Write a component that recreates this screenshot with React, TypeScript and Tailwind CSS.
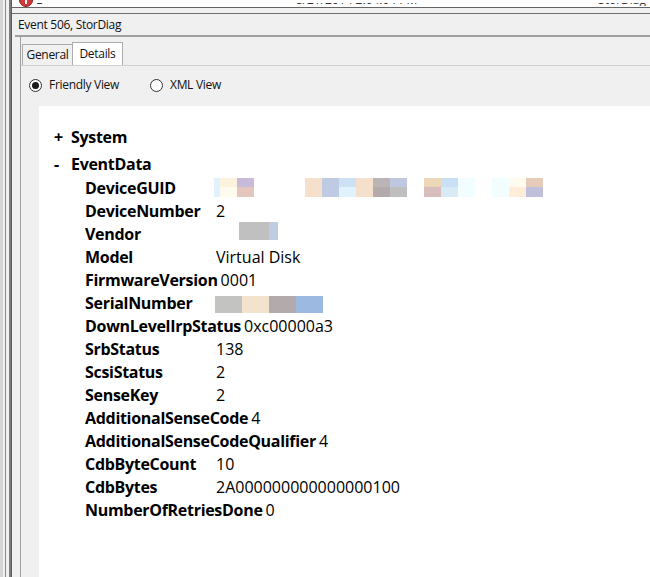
import React from 'react';

type Px = { w: number; top: string; bottom?: string };

const guidBlocks: (Px | number)[] = [
  { w: 6, top: '#e1f1fd' },
  { w: 17, top: '#fdf3dc', bottom: '#fffbef' },
  { w: 17, top: '#c8badb', bottom: '#e3c7bd' },
  51,
  { w: 17, top: '#f4e0cb' },
  { w: 17, top: '#bfcbe2' },
  { w: 17, top: '#cde1f5', bottom: '#e0f2fd' },
  { w: 17, top: '#f4e0cb' },
  { w: 17, top: '#bcb5b8', bottom: '#b4aaab' },
  { w: 17, top: '#bfc8e0', bottom: '#bfbfbf' },
  17,
  { w: 17, top: '#ecd6b8', bottom: '#d8bdbf' },
  { w: 17, top: '#c8dff5', bottom: '#d8ebf5' },
  { w: 17, top: '#f1fdfe' },
  17,
  { w: 17, top: '#f1fdfe' },
  { w: 17, top: '#fffcef', bottom: '#ffecd9' },
  { w: 17, top: '#e6cbbb', bottom: '#bfbedb' },
];

const vendorBlocks = [
  { w: 30, c: '#c0c0c0' },
  { w: 9, c: '#bfcde2' },
];

const serialBlocks = [
  { w: 27, c: '#c3c4c1' },
  { w: 27, c: '#f3e2cc' },
  { w: 27, c: '#b3abab' },
  { w: 27, c: '#9bb9e1' },
];

const GuidValue = () => (
  <div className="flex -ml-[2px] -mt-[1px]">
    {guidBlocks.map((b, i) =>
      typeof b === 'number' ? (
        <div key={i} style={{ width: b }} />
      ) : (
        <div key={i} className="flex flex-col" style={{ width: b.w }}>
          <div className="h-[9px]" style={{ backgroundColor: b.top }} />
          <div className="h-[10px]" style={{ backgroundColor: b.bottom ?? b.top }} />
        </div>
      )
    )}
  </div>
);

const VendorValue = () => (
  <div className="flex ml-[23px] -mt-[6px]">
    {vendorBlocks.map((b, i) => (
      <div key={i} className="h-[18px]" style={{ width: b.w, backgroundColor: b.c }} />
    ))}
  </div>
);

const SerialValue = () => (
  <div className="flex -ml-[1px] mt-[4px]">
    {serialBlocks.map((b, i) => (
      <div key={i} className="h-[17px]" style={{ width: b.w, backgroundColor: b.c }} />
    ))}
  </div>
);

const rows: { k: string; v: React.ReactNode }[] = [
  { k: 'DeviceGUID', v: <GuidValue /> },
  { k: 'DeviceNumber', v: '2' },
  { k: 'Vendor', v: <VendorValue /> },
  { k: 'Model', v: 'Virtual Disk' },
  { k: 'FirmwareVersion', v: '0001' },
  { k: 'SerialNumber', v: <SerialValue /> },
  { k: 'DownLevelIrpStatus', v: '0xc00000a3' },
  { k: 'SrbStatus', v: '138' },
  { k: 'ScsiStatus', v: '2' },
  { k: 'SenseKey', v: '2' },
  { k: 'AdditionalSenseCode', v: '4' },
  { k: 'AdditionalSenseCodeQualifier', v: '4' },
  { k: 'CdbByteCount', v: '10' },
  { k: 'CdbBytes', v: '2A000000000000000100' },
  { k: 'NumberOfRetriesDone', v: '0' },
];

const Radio = ({ checked, label }: { checked?: boolean; label: string }) => (
  <div className="flex items-center gap-[7px]">
    <div className="w-[13px] h-[13px] rounded-full border border-[#333] bg-white flex items-center justify-center">
      {checked && <div className="w-[7px] h-[7px] rounded-full bg-[#1a1a1a]" />}
    </div>
    <span className="text-[12px] tracking-[-0.3px] text-[#111]">{label}</span>
  </div>
);

const App = () => {
  return (
    <div className="w-[650px] h-[577px] flex overflow-hidden bg-[#f0f0f0] font-['Open_Sans',sans-serif] text-black">
      {/* window frame on the left */}
      <div className="flex shrink-0 h-full">
        <div className="w-[3px] bg-[#d5d5d5]" />
        <div className="w-[2px]" />
        <div className="w-[1px] bg-[#8c8c8c]" />
        <div className="w-[3px]" />
        <div className="w-[2px] bg-[#7d7d7d]" />
        <div className="w-[1px] bg-[#5a5a5a]" />
      </div>

      <div className="flex-1 flex flex-col min-w-0">
        {/* list row scrolled almost out of view */}
        <div className="h-[7px] bg-white flex items-end shrink-0 relative">
          <div className="h-[7px] overflow-hidden ml-[7px] shrink-0">
            <svg width="14" height="14" viewBox="0 0 14 14" className="-mt-[7px]">
              <circle cx="7" cy="7" r="6.5" fill="#d23a3a" stroke="#8b1a1a" />
              <rect x="6" y="3" width="2" height="8" fill="#fff" />
            </svg>
          </div>
          <div className="flex-1 h-[3px] overflow-hidden mb-[1px] text-[12px] leading-[14px] text-[#333]">
            <div className="flex -mt-[10px]">
              <span className="ml-[3px]">E</span>
              <span className="ml-[253px]">8/21/2014 2:04:04 PM</span>
              <span className="ml-auto mr-[4px]">StorDiag</span>
            </div>
          </div>
        </div>
        <div className="h-[1px] bg-[#646464] shrink-0" />
        <div className="h-[5px] shrink-0" />
        <div className="h-[1px] bg-[#6e6e6e] shrink-0" />

        {/* title */}
        <div className="h-[21px] flex items-center pl-[6px] pt-[1px] text-[12px] tracking-[-0.3px] text-[#111] shrink-0">
          Event 506, StorDiag
        </div>
        <div className="h-[2px] ml-[3px] bg-[#a0a0a0] shrink-0" />

        <div className="flex-1 flex min-h-0">
          <div className="w-[8px] shrink-0" />
          <div className="flex-1 flex flex-col border-l border-[#a0a0a0] min-w-0">
            {/* tabs */}
            <div className="h-[29px] flex items-end pl-[1px] border-b border-[#d0d0d0] shrink-0 text-[12px] tracking-[-0.3px] text-[#111]">
              <div className="w-[50px] h-[21px] border-l border-t border-[#acacac] bg-[#f0f0f0] flex items-center justify-center">
                General
              </div>
              <div className="w-[51px] h-[23px] border-l border-t border-r border-[#acacac] bg-white flex items-start justify-center pt-[2px]">
                Details
              </div>
            </div>

            {/* panel */}
            <div className="flex-1 flex flex-col min-h-0">
              <div className="h-[40px] pb-[2px] pl-[8px] flex items-center shrink-0">
                <div className="w-[121px]">
                  <Radio checked label="Friendly View" />
                </div>
                <Radio label="XML View" />
              </div>

              <div className="flex-1 ml-[18px] bg-white pt-[19px] text-[16px]">
                <div className="h-[24px] flex items-center pl-[15px] font-bold tracking-[-0.3px]">
                  <span className="w-[17px]">+</span>
                  <span>System</span>
                </div>
                <div className="h-[27px] flex items-center pl-[15px] pt-[2px] font-bold tracking-[-0.3px]">
                  <span className="w-[17px]">-</span>
                  <span>EventData</span>
                </div>
                <div className="pl-[46px]">
                  {rows.map((r) => (
                    <div key={r.k} className="h-[23px] flex items-center whitespace-nowrap">
                      <span className="min-w-[131px] pr-[3px] font-bold tracking-[-0.3px]">{r.k}</span>
                      <span className="flex">{r.v}</span>
                    </div>
                  ))}
                </div>
              </div>
            </div>
          </div>
        </div>
      </div>
    </div>
  );
};

export default App;
